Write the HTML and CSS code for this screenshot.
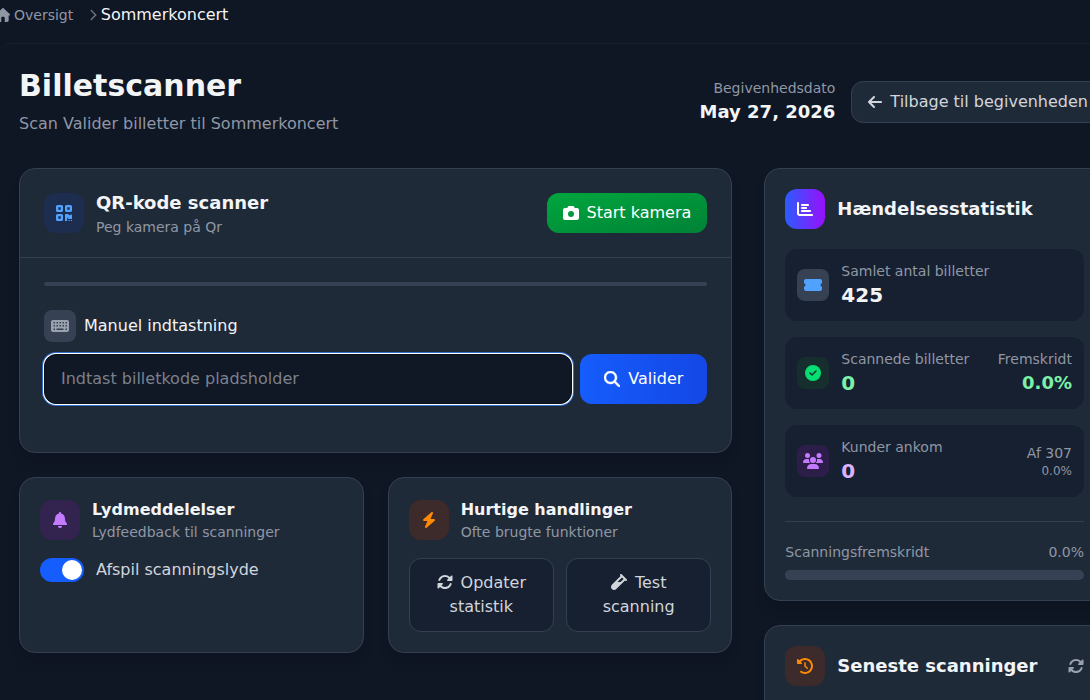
FILE: index.html
```html
<!DOCTYPE html>
<html lang="da">
<head>
    <meta charset="UTF-8">
    <meta name="viewport" content="width=device-width, initial-scale=1.0">
    <title>Billetscanner</title>
    <link rel="stylesheet" href="styles.css">
</head>
<body>

    <nav class="breadcrumb">
        <a href="#" class="crumb">
            <svg class="icon icon-sm" viewBox="0 0 512 512"><path d="M277.8 8.6c-12.3-11.4-31.3-11.4-43.5 0l-224 208c-9.6 9-12.8 22.9-8 35.1S18.8 272 32 272h16v176c0 35.3 28.7 64 64 64h288c35.3 0 64-28.7 64-64V272h16c13.2 0 25-8.1 29.8-20.3s1.6-26.2-8-35.1l-224-208zM240 320h32c26.5 0 48 21.5 48 48v144H192v-144c0-26.5 21.5-48 48-48z" fill-rule="evenodd"/></svg>
            Oversigt
        </a>
        <svg class="icon icon-xs crumb-sep" viewBox="0 0 320 512"><path d="M310.6 233.4c12.5 12.5 12.5 32.8 0 45.3l-192 192c-12.5 12.5-32.8 12.5-45.3 0s-12.5-32.8 0-45.3L242.7 256 73.4 86.6c-12.5-12.5-12.5-32.8 0-45.3s32.8-12.5 45.3 0l192 192z"/></svg>
        <span class="crumb-current">Sommerkoncert</span>
    </nav>

    <main class="page">

        <header class="page-header">
            <div>
                <h1>Billetscanner</h1>
                <p class="subtitle">Scan Valider billetter til Sommerkoncert</p>
            </div>
            <div class="header-actions">
                <div class="event-date">
                    <span class="label">Begivenhedsdato</span>
                    <strong>May 27, 2026</strong>
                </div>
                <a href="#" class="btn btn-back">
                    <svg class="icon" viewBox="0 0 448 512"><path d="M9.4 233.4c-12.5 12.5-12.5 32.8 0 45.3l160 160c12.5 12.5 32.8 12.5 45.3 0s12.5-32.8 0-45.3L109.2 288 416 288c17.7 0 32-14.3 32-32s-14.3-32-32-32l-306.7 0L214.6 118.6c12.5-12.5 12.5-32.8 0-45.3s-32.8-12.5-45.3 0l-160 160z"/></svg>
                    Tilbage til begivenheden
                </a>
            </div>
        </header>

        <div class="layout">

            <div class="column">

                <!-- Scanner -->
                <section class="card scanner">
                    <div class="scanner-head">
                        <div class="card-title">
                            <div class="tile tile-blue">
                                <svg class="icon" viewBox="0 0 16 16"><path fill-rule="evenodd" d="M1.5 0h4A1.5 1.5 0 0 1 7 1.5v4A1.5 1.5 0 0 1 5.5 7h-4A1.5 1.5 0 0 1 0 5.5v-4A1.5 1.5 0 0 1 1.5 0zM2.300 2.300v2.400h2.400v-2.400zM10.500 0h4A1.500 1.500 0 0 1 16 1.500v4A1.500 1.500 0 0 1 14.500 7h-4A1.500 1.500 0 0 1 9 5.500v-4A1.500 1.500 0 0 1 10.500 0zM11.300 2.300v2.400h2.400v-2.400zM1.500 9h4A1.500 1.500 0 0 1 7 10.500v4A1.500 1.500 0 0 1 5.500 16h-4A1.500 1.500 0 0 1 0 14.500v-4A1.500 1.500 0 0 1 1.500 9zM2.300 11.300v2.400h2.400v-2.400zM9.500 9h2.800l1.200 1.200h1V9.500H16v4.500h-3.800v-1.200h-1V16H9V9.500zM12.500 15h1.200v1h-1.200zM14.800 15H16v1h-1.200z"/></svg>
                            </div>
                            <div>
                                <h2>QR-kode scanner</h2>
                                <p class="label">Peg kamera på Qr</p>
                            </div>
                        </div>
                        <button type="button" class="btn btn-green">
                            <svg class="icon" viewBox="0 0 512 512"><path d="M149.1 64.8L138.7 96H64C28.7 96 0 124.7 0 160V416c0 35.3 28.7 64 64 64H448c35.3 0 64-28.7 64-64V160c0-35.3-28.7-64-64-64H373.3L362.9 64.8C356.4 45.2 338.1 32 317.4 32H194.6c-20.7 0-39 13.2-45.5 32.8zM256 192a96 96 0 1 1 0 192 96 96 0 1 1 0-192z"/></svg>
                            Start kamera
                        </button>
                    </div>
                    <div class="scanner-body">
                        <div class="camera-view"></div>
                        <form class="manual">
                            <label for="ticket-code" class="manual-label">
                                <span class="tile tile-sm tile-gray">
                                    <svg class="icon" viewBox="0 0 576 512"><path fill-rule="evenodd" d="M64 64C28.7 64 0 92.7 0 128V384c0 35.3 28.7 64 64 64H512c35.3 0 64-28.7 64-64V128c0-35.3-28.7-64-64-64zM80 128h48v48h-48zM176 128h48v48h-48zM272 128h48v48h-48zM368 128h48v48h-48zM464 128h48v48h-48zM80 224h48v48h-48zM176 224h48v48h-48zM272 224h48v48h-48zM368 224h48v48h-48zM464 224h48v48h-48zM80 336h48v48h-48zM176 336h224v48h-224zM464 336h48v48h-48z"/></svg>
                                </span>
                                Manuel indtastning
                            </label>
                            <div class="manual-row">
                                <input type="text" id="ticket-code" placeholder="Indtast billetkode pladsholder">
                                <button type="submit" class="btn btn-blue">
                                    <svg class="icon" viewBox="0 0 512 512"><path stroke="currentColor" stroke-width="12" d="M416 208c0 45.9-14.9 88.3-40 122.7L502.6 457.4c12.5 12.5 12.5 32.8 0 45.3s-32.8 12.5-45.3 0L330.7 376c-34.4 25.2-76.8 40-122.7 40C93.1 416 0 322.9 0 208S93.1 0 208 0S416 93.1 416 208zM208 352a144 144 0 1 0 0-288 144 144 0 1 0 0 288z"/></svg>
                                    Valider
                                </button>
                            </div>
                        </form>
                    </div>
                </section>

                <div class="card-pair">
                    <!-- Sound -->
                    <section class="card padded">
                        <div class="card-title">
                            <div class="tile tile-purple">
                                <svg class="icon" viewBox="0 0 448 512"><path d="M224 0c-17.7 0-32 14.3-32 32V51.2C119 66 64 130.6 64 208v18.8c0 47-17.3 92.4-48.5 127.6l-7.4 8.3c-8.4 9.4-10.4 22.9-5.3 34.4S19.4 416 32 416H416c12.6 0 24-7.4 29.2-18.9s3.1-25-5.3-34.4l-7.4-8.3C401.3 319.2 384 273.9 384 226.8V208c0-77.4-55-142-128-156.8V32c0-17.7-14.3-32-32-32zm45.3 493.3c12-12 18.7-28.3 18.7-45.3H224 160c0 17 6.7 33.3 18.7 45.3s28.3 18.7 45.3 18.7s33.3-6.7 45.3-18.7z"/></svg>
                            </div>
                            <div>
                                <h3>Lydmeddelelser</h3>
                                <p class="label">Lydfeedback til scanninger</p>
                            </div>
                        </div>
                        <label class="switch-row">
                            <input type="checkbox" class="switch" checked>
                            Afspil scanningslyde
                        </label>
                    </section>

                    <!-- Quick actions -->
                    <section class="card padded">
                        <div class="card-title">
                            <div class="tile tile-orange">
                                <svg class="icon" viewBox="0 0 448 512"><path d="M349.4 44.6c5.9-13.7 1.5-29.7-10.6-38.5s-28.6-8-39.9 1.8l-256 224c-10 8.8-13.6 22.9-8.9 35.3S50.7 288 64 288H175.5L98.6 467.4c-5.9 13.7-1.5 29.7 10.6 38.5s28.6 8 39.9-1.8l256-224c10-8.8 13.6-22.9 8.9-35.3s-16.6-20.7-30-20.7H272.5L349.4 44.6z"/></svg>
                            </div>
                            <div>
                                <h3>Hurtige handlinger</h3>
                                <p class="label">Ofte brugte funktioner</p>
                            </div>
                        </div>
                        <div class="actions">
                            <button type="button" class="btn-action"><svg class="icon" viewBox="0 0 512 512"><path d="M142.9 142.9c62.2-62.2 162.7-62.5 225.3-1L327 183c-6.9 6.9-8.9 17.2-5.2 26.2s12.5 14.8 22.2 14.8H472c13.3 0 24-10.7 24-24V72c0-9.7-5.8-18.5-14.8-22.2s-19.3-1.7-26.2 5.2L413.4 96.6c-87.6-86.5-228.7-86.2-315.8 1C73.2 122 55.6 150.7 44.8 181.4c-5.9 16.7 2.9 34.9 19.5 40.8s34.9-2.9 40.8-19.5c7.7-21.8 20.2-42.3 37.8-59.8zM16 312V440c0 9.7 5.8 18.5 14.8 22.2s19.3 1.7 26.2-5.2l41.6-41.6c87.6 86.5 228.7 86.2 315.8-1c24.4-24.4 42.1-53.1 52.9-83.7c5.9-16.7-2.9-34.9-19.5-40.8s-34.9 2.9-40.8 19.5c-7.7 21.8-20.2 42.3-37.8 59.8c-62.2 62.2-162.7 62.5-225.3 1L185 329c6.9-6.9 8.9-17.2 5.2-26.2s-12.5-14.8-22.2-14.8H40c-13.3 0-24 10.7-24 24z"/></svg>Opdater statistik</button>
                            <button type="button" class="btn-action"><svg class="icon" viewBox="0 0 512 512"><path d="M342.6 9.4c-12.5-12.5-32.8-12.5-45.3 0s-12.5 32.8 0 45.3l9.4 9.4L28.1 342.6C10.1 360.6 0 385 0 410.5V416c0 53 43 96 96 96h5.5c25.5 0 49.9-10.1 67.9-28.1L448 205.3l9.4 9.4c12.5 12.5 32.8 12.5 45.3 0s12.5-32.8 0-45.3l-32-32-96-96-32-32zM205.3 256L352 109.3 402.7 160l-96 96H205.3z"/></svg>Test scanning</button>
                        </div>
                    </section>
                </div>
            </div>

            <aside class="column">

                <!-- Statistics -->
                <section class="card padded">
                    <div class="card-title">
                        <div class="tile tile-gradient">
                            <svg class="icon" viewBox="0 0 512 512"><path d="M32 32c17.7 0 32 14.3 32 32V400c0 8.8 7.2 16 16 16H480c17.7 0 32 14.3 32 32s-14.3 32-32 32H80c-44.2 0-80-35.8-80-80V64C0 46.3 14.3 32 32 32zm96 96c0-17.7 14.3-32 32-32l192 0c17.7 0 32 14.3 32 32s-14.3 32-32 32H160c-17.7 0-32-14.3-32-32zm32 64H288c17.7 0 32 14.3 32 32s-14.3 32-32 32H160c-17.7 0-32-14.3-32-32s14.3-32 32-32zm0 96H416c17.7 0 32 14.3 32 32s-14.3 32-32 32H160c-17.7 0-32-14.3-32-32s14.3-32 32-32z"/></svg>
                        </div>
                        <h2>Hændelsesstatistik</h2>
                    </div>

                    <div class="stats">
                        <div class="stat">
                            <div class="tile tile-sm tile-gray">
                                <svg class="icon icon-blue" viewBox="0 0 576 512"><path d="M0 128C0 92.7 28.7 64 64 64H512c35.3 0 64 28.7 64 64v64c0 8.8-7.4 15.7-15.7 18.6C541.5 217.1 528 235 528 256s13.5 38.9 32.3 45.4c8.3 2.9 15.7 9.8 15.7 18.6v64c0 35.3-28.7 64-64 64H64c-35.3 0-64-28.7-64-64V320c0-8.8 7.4-15.7 15.7-18.6C34.5 294.9 48 277 48 256s-13.5-38.9-32.3-45.4C7.4 207.7 0 200.8 0 192V128z"/></svg>
                            </div>
                            <div class="stat-main">
                                <p class="label">Samlet antal billetter</p>
                                <p class="stat-value">425</p>
                            </div>
                        </div>
                        <div class="stat">
                            <div class="tile tile-sm tile-green">
                                <svg class="icon" viewBox="0 0 512 512"><path d="M256 512A256 256 0 1 0 256 0a256 256 0 1 0 0 512zM369 209L241 337c-9.4 9.4-24.6 9.4-33.9 0l-64-64c-9.4-9.4-9.4-24.6 0-33.9s24.6-9.4 33.9 0l47 47L335 175c9.4-9.4 24.6-9.4 33.9 0s9.4 24.6 0 33.9z"/></svg>
                            </div>
                            <div class="stat-main">
                                <p class="label">Scannede billetter</p>
                                <p class="stat-value green">0</p>
                            </div>
                            <div class="stat-side">
                                <p class="label">Fremskridt</p>
                                <p class="stat-percent green">0.0%</p>
                            </div>
                        </div>
                        <div class="stat">
                            <div class="tile tile-sm tile-purple">
                                <svg class="icon" viewBox="0 0 640 512"><path d="M144 0a80 80 0 1 1 0 160A80 80 0 1 1 144 0zM512 0a80 80 0 1 1 0 160A80 80 0 1 1 512 0zM0 298.7C0 239.8 47.8 192 106.7 192h42.7c15.9 0 31 3.5 44.6 9.7c-1.3 7.2-1.9 14.7-1.9 22.3c0 38.2 16.8 72.5 43.3 96c-.2 0-.4 0-.7 0H21.3C9.6 320 0 310.4 0 298.7zM405.3 320c-.2 0-.4 0-.7 0c26.6-23.5 43.3-57.8 43.3-96c0-7.6-.7-15-1.9-22.3c13.6-6.3 28.7-9.7 44.6-9.7h42.7C592.2 192 640 239.8 640 298.7c0 11.8-9.6 21.3-21.3 21.3H405.3zM224 224a96 96 0 1 1 192 0 96 96 0 1 1 -192 0zM128 485.3C128 411.7 187.7 352 261.3 352H378.7C452.3 352 512 411.7 512 485.3c0 14.7-11.9 26.7-26.7 26.7H154.7c-14.7 0-26.7-11.9-26.7-26.7z"/></svg>
                            </div>
                            <div class="stat-main">
                                <p class="label">Kunder ankom</p>
                                <p class="stat-value purple">0</p>
                            </div>
                            <div class="stat-side">
                                <p class="label">Af 307</p>
                                <p class="stat-note">0.0%</p>
                            </div>
                        </div>
                    </div>

                    <div class="progress-block">
                        <div class="progress-head label">
                            <span id="progress-label">Scanningsfremskridt</span>
                            <span>0.0%</span>
                        </div>
                        <div class="progress" role="progressbar" aria-labelledby="progress-label" aria-valuenow="0">
                            <div class="progress-fill" style="width: 0%"></div>
                        </div>
                    </div>
                </section>

                <!-- Recent scans -->
                <section class="card padded recent">
                    <div class="card-title">
                        <div class="tile tile-orange">
                            <svg class="icon" viewBox="0 0 512 512"><path d="M75 75L41 41C25.9 25.9 0 36.6 0 57.9V168c0 13.3 10.7 24 24 24H134.1c21.4 0 32.1-25.9 17-41l-30.8-30.8C155 85.5 203 64 256 64c106 0 192 86 192 192s-86 192-192 192c-40.8 0-78.6-12.7-109.7-34.4c-14.5-10.1-34.4-6.6-44.6 7.9s-6.6 34.4 7.9 44.6C151.2 495 201.7 512 256 512c141.4 0 256-114.6 256-256S397.4 0 256 0C185.3 0 121.3 28.7 75 75zm181 53c-13.3 0-24 10.7-24 24V256c0 6.4 2.5 12.5 7 17l72 72c9.4 9.4 24.6 9.4 33.9 0s9.4-24.6 0-33.9l-65-65V152c0-13.3-10.7-24-24-24z"/></svg>
                        </div>
                        <h2>Seneste scanninger</h2>
                        <button type="button" class="btn-icon" aria-label="Opdater">
                            <svg class="icon" viewBox="0 0 512 512"><path d="M142.9 142.9c62.2-62.2 162.7-62.5 225.3-1L327 183c-6.9 6.9-8.9 17.2-5.2 26.2s12.5 14.8 22.2 14.8H472c13.3 0 24-10.7 24-24V72c0-9.7-5.8-18.5-14.8-22.2s-19.3-1.7-26.2 5.2L413.4 96.6c-87.6-86.5-228.7-86.2-315.8 1C73.2 122 55.6 150.7 44.8 181.4c-5.9 16.7 2.9 34.9 19.5 40.8s34.9-2.9 40.8-19.5c7.7-21.8 20.2-42.3 37.8-59.8zM16 312V440c0 9.7 5.8 18.5 14.8 22.2s19.3 1.7 26.2-5.2l41.6-41.6c87.6 86.5 228.7 86.2 315.8-1c24.4-24.4 42.1-53.1 52.9-83.7c5.9-16.7-2.9-34.9-19.5-40.8s-34.9 2.9-40.8 19.5c-7.7 21.8-20.2 42.3-37.8 59.8c-62.2 62.2-162.7 62.5-225.3 1L185 329c6.9-6.9 8.9-17.2 5.2-26.2s-12.5-14.8-22.2-14.8H40c-13.3 0-24 10.7-24 24z"/></svg>
                        </button>
                    </div>
                </section>
            </aside>

        </div>
    </main>

</body>
</html>
```
FILE: styles.css
```css
/* --- Base and Theme Setup --- */
:root {
    --bg: #0f1624;
    --card: #1f2a39;
    --inset: #172030;
    --border: #344052;
    --muted: #8f97a5;
    --text: #f3f4f6;
    --text-soft: #d1d5dc;
    --radius-lg: 16px;
    --radius-md: 12px;
    --radius-sm: 8px;
}

* {
    box-sizing: border-box;
}

body {
    margin: 0;
    min-height: 100vh;
    font-family: 'DejaVu Sans', sans-serif;
    font-size: 16px;
    line-height: 24px;
    color: var(--text);
    background: var(--bg);
    overflow: hidden;
}

h1, h2, h3, p {
    margin: 0;
}

h1 {
    font-size: 30px;
    line-height: 36px;
}

h2 {
    font-size: 18px;
    line-height: 28px;
}

h3 {
    font-size: 16px;
    line-height: 24px;
}

button, input {
    font: inherit;
}

button {
    cursor: pointer;
}

a {
    color: inherit;
    text-decoration: none;
}

.label {
    font-size: 14px;
    line-height: 20px;
    color: var(--muted);
}

.icon {
    height: 16px;
    fill: currentColor;
    flex-shrink: 0;
}

.icon-sm {
    height: 14px;
}

.icon-xs {
    height: 12px;
}

.icon-blue {
    color: #51a2ff;
}

/* --- Breadcrumb --- */
.breadcrumb {
    display: flex;
    align-items: center;
    height: 43px;
    padding-bottom: 14px;
    margin-left: -4px; /* tucks the home icon against the window edge */
}

.crumb {
    display: flex;
    align-items: center;
    gap: 4px;
    font-size: 14px;
    color: var(--muted);
}

.crumb-sep {
    margin: 0 4px 0 16px;
    color: #6a7282;
}

/* --- Page --- */
.page {
    margin-right: -15px; /* the right column runs past the window */
    padding: 24px 0 24px 19px;
    border-top: 1px solid #1a2231;
    border-radius: var(--radius-md);
}

.page-header {
    display: flex;
    align-items: center;
    justify-content: space-between;
    margin-bottom: 32px;
}

.subtitle {
    margin-top: 8px;
    color: var(--muted);
}

.header-actions {
    display: flex;
    align-items: center;
    gap: 16px;
}

.event-date {
    display: flex;
    flex-direction: column;
    text-align: right;
}

.event-date strong {
    font-size: 18px;
    line-height: 28px;
}

.layout {
    display: grid;
    grid-template-columns: repeat(3, 1fr);
    align-items: start;
    gap: 32px;
}

.column {
    display: grid;
    gap: 24px;
}

.column:first-child {
    grid-column: span 2;
}

/* --- Buttons --- */
.btn {
    display: flex;
    align-items: center;
    gap: 8px;
    padding: 8px 16px;
    border: none;
    border-radius: var(--radius-md);
    color: #fff;
    white-space: nowrap;
}

.btn-back {
    border: 1px solid var(--border);
    background: var(--card);
    color: var(--text-soft);
}

.btn-green {
    background: linear-gradient(to bottom right, #00a63e, #008236);
}

.btn-blue {
    padding: 8px 24px;
    background: linear-gradient(to right, #155dfc, #1447e6);
}

.btn-icon {
    display: flex;
    margin-left: auto;
    padding: 0;
    border: none;
    background: none;
    color: #99a1af;
}

/* --- Cards --- */
.card {
    border: 1px solid var(--border);
    border-radius: var(--radius-lg);
    background: var(--card);
    box-shadow: 0 10px 15px -3px rgba(0, 0, 0, 0.1);
}

.padded {
    padding: 20px;
}

.card-title {
    display: flex;
    align-items: center;
    gap: 12px;
}

.card-pair {
    display: grid;
    grid-template-columns: 1fr 1fr;
    gap: 24px;
}

/* Square behind an icon */
.tile {
    display: flex;
    align-items: center;
    justify-content: center;
    flex-shrink: 0;
    width: 40px;
    height: 40px;
    border-radius: var(--radius-md);
}

.tile-sm {
    width: 32px;
    height: 32px;
    border-radius: var(--radius-sm);
}

.tile-blue {
    background: #1c2d50;
    color: #51a2ff;
}

.tile-purple {
    background: #32234f;
    color: #c27aff;
}

.tile-sm.tile-purple {
    background: #2d1d49;
}

.tile-orange {
    background: #3d2a2a;
    color: #ff8904;
}

.tile-green {
    background: #162e2e;
    color: #05df72;
}

.tile-gray {
    background: #364153;
    color: #99a1af;
}

.tile-gradient {
    background: linear-gradient(to right, #2b5cff, #9810fa);
    color: #fff;
}

/* --- Scanner --- */
.scanner-head {
    display: flex;
    align-items: center;
    justify-content: space-between;
    padding: 20px 24px;
    border-bottom: 1px solid var(--border);
}

.scanner-body {
    padding: 24px 24px 48px;
}

.camera-view {
    border: 2px solid #364153;
    border-radius: var(--radius-md);
    margin-bottom: 24px;
}

.manual-label {
    display: flex;
    align-items: center;
    gap: 8px;
    margin-bottom: 12px;
}

.manual-row {
    display: flex;
    gap: 8px;
}

.manual-row input {
    flex: 1;
    min-width: 0;
    padding: 12px 16px;
    border: 1px solid #0b0f17;
    border-radius: var(--radius-md);
    background: #101725;
    color: var(--text);
    outline: none;
    box-shadow: 0 0 0 1px #fff, 0 0 0 2px #2f6fd0;
}

.manual-row input::placeholder {
    color: #7b818c;
}

/* --- Sound switch --- */
.switch-row {
    display: flex;
    align-items: center;
    gap: 12px;
    margin-top: 16px;
    color: var(--text-soft);
}

.switch {
    appearance: none;
    display: flex;
    width: 44px;
    height: 24px;
    margin: 0;
    padding: 2px;
    border-radius: 12px;
    background: #364153;
    cursor: pointer;
}

.switch::before {
    content: "";
    width: 20px;
    height: 20px;
    border-radius: 50%;
    background: #fff;
}

.switch:checked {
    justify-content: flex-end;
    background: #155dfc;
}

/* --- Quick actions --- */
.actions {
    display: grid;
    grid-template-columns: 1fr 1fr;
    gap: 12px;
    margin-top: 16px;
}

.btn-action {
    padding: 12px 16px;
    border: 1px solid var(--border);
    border-radius: var(--radius-md);
    background: var(--inset);
    color: var(--text-soft);
}

.btn-action .icon {
    margin-right: 8px;
    vertical-align: -2px;
}

/* --- Statistics --- */
.stats {
    display: grid;
    gap: 16px;
    margin: 20px 0 24px;
}

.stat {
    display: flex;
    align-items: center;
    gap: 12px;
    padding: 12px;
    border-radius: var(--radius-md);
    background: var(--inset);
}

.stat-main {
    flex: 1;
}

.stat-side {
    text-align: right;
}

.stat-value {
    font-size: 20px;
    line-height: 28px;
    font-weight: 700;
}

.stat-percent {
    font-size: 18px;
    line-height: 28px;
    font-weight: 700;
}

.stat-note {
    font-size: 12px;
    line-height: 16px;
    color: var(--muted);
}

.green {
    color: #7bf1a8;
}

.purple {
    color: #dab2ff;
}

.progress-block {
    padding-top: 20px;
    border-top: 1px solid var(--border);
}

.progress-head {
    display: flex;
    justify-content: space-between;
    margin-bottom: 8px;
}

.progress {
    height: 10px;
    border-radius: 5px;
    background: #364153;
    overflow: hidden;
}

.progress-fill {
    height: 100%;
    background: #155dfc;
}

/* --- Recent scans --- */
.recent {
    min-height: 120px;
}
```
